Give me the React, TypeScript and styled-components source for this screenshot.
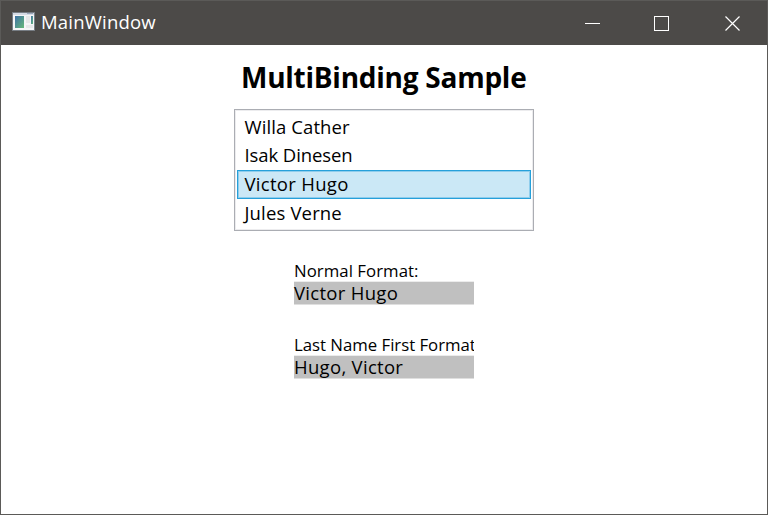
import React, { useState } from "react";
import styled, { createGlobalStyle } from "styled-components";

const Global = createGlobalStyle`
  * { box-sizing: border-box; }
  body { margin: 0; background: #fff; overflow: hidden; }
`;

const Window = styled.div`
  width: 768px;
  height: 515px;
  display: flex;
  flex-direction: column;
  border: 1px solid #5b5a58;
  background: #fff;
  color: #000;
  font-family: "Open Sans", "Noto Sans", sans-serif;
  font-size: 18.5px;
`;

const TitleBar = styled.header`
  height: 44px;
  flex: none;
  display: flex;
  align-items: center;
  padding-left: 11px;
  padding-bottom: 2px;
  background: #4c4a48;
  color: #fff;
`;

const Caption = styled.span`
  flex: 1;
  margin-left: 6px;
  line-height: 24px;
  white-space: nowrap;
  letter-spacing: 0.2px;
`;

const CaptionButton = styled.button<{ $inset: number }>`
  width: 70px;
  height: 42px;
  padding: 2px 0 0 ${(p) => p.$inset}px;
  border: 0;
  background: none;
  display: flex;
  align-items: center;
`;

const Content = styled.main`
  display: flex;
  flex-direction: column;
  align-items: center;
`;

const Heading = styled.h1`
  margin: 13px 0 0;
  width: 286px;
  height: 51px;
  font-size: 28px;
  line-height: 38px;
  font-weight: 700;
  white-space: nowrap;
  letter-spacing: -0.25px;
`;

const ListBox = styled.ul`
  list-style: none;
  margin: 0;
  width: 300px;
  height: 122px;
  padding: 3px 2px 2px;
  border: 1px solid #abadb3;
  box-shadow: inset 0 0 0 1px #ececee;
  display: grid;
  grid-template-rows: 28px 29px 29px 29px;
`;

const ListItem = styled.li<{ $selected: boolean; $spacing: number }>`
  height: 29px;
  padding: 0 0 0 6.5px;
  border: 1px solid ${(p) => (p.$selected ? "#26a0da" : "transparent")};
  background: ${(p) => (p.$selected ? "#cbe8f6" : "transparent")};
  box-shadow: ${(p) => (p.$selected ? "inset 0 0 0 1px #8fcdec" : "none")};
  line-height: 25px;
  white-space: nowrap;
  letter-spacing: ${(p) => p.$spacing}px;
`;

const Field = styled.section`
  width: 180px;
  margin-top: 28px;
`;

const Label = styled.div<{ $spacing: number }>`
  height: 22px;
  padding-top: 1px;
  font-size: 16.8px;
  line-height: 22px;
  white-space: nowrap;
  overflow: hidden;
  letter-spacing: ${(p) => p.$spacing}px;
`;

const Value = styled.div<{ $spacing: number }>`
  height: 24px;
  border-top: 1px solid #ececec;
  border-bottom: 1px solid #dfdfdf;
  background: #c0c0c0;
  line-height: 22px;
  white-space: nowrap;
  letter-spacing: ${(p) => p.$spacing}px;
`;

const IconDrawing = styled.svg`
  flex: none;
  margin-bottom: 1px;
`;

const AppIcon = () => (
  <IconDrawing width="23" height="19" viewBox="0 0 23 19">
    <defs>
      <linearGradient id="pane" x1="0" y1="0" x2="1" y2="1">
        <stop offset="0" stopColor="#3e70a6" />
        <stop offset="1" stopColor="#65b878" />
      </linearGradient>
    </defs>
    <rect x="0.5" y="0.5" width="22" height="18" fill="#f4f5f6" stroke="#777d84" />
    <rect x="1" y="1" width="21" height="2" fill="#d5dae4" />
    <rect x="15" y="1" width="6" height="1" fill="#9aa6ba" />
    <rect x="3" y="4" width="9" height="12" fill="url(#pane)" />
    <rect x="14" y="4" width="4" height="7" fill="#e6e7e8" />
    <rect x="19" y="4" width="2" height="8" fill="url(#pane)" />
    <rect x="14" y="13" width="7" height="3" fill="#e6e7e8" />
  </IconDrawing>
);

const people = [
  { first: "Willa", last: "Cather", spacing: 0.1 },
  { first: "Isak", last: "Dinesen", spacing: -0.1 },
  { first: "Victor", last: "Hugo", spacing: 0.3 },
  { first: "Jules", last: "Verne", spacing: 0.15 },
];

export default function App() {
  const [index, setIndex] = useState(2);
  const person = people[index];
  return (
    <>
      <Global />
      <Window>
        <TitleBar>
          <AppIcon />
          <Caption>MainWindow</Caption>
          <CaptionButton aria-label="Minimize" $inset={28}>
            <svg width="16" height="16" shapeRendering="crispEdges">
              <path d="M0 8.5H15" stroke="#fff" />
            </svg>
          </CaptionButton>
          <CaptionButton aria-label="Maximize" $inset={27}>
            <svg width="16" height="16" shapeRendering="crispEdges">
              <rect x="0.5" y="1.5" width="14" height="14" fill="none" stroke="#fff" />
            </svg>
          </CaptionButton>
          <CaptionButton aria-label="Close" $inset={28}>
            <svg width="16" height="16">
              <path d="M0.5 1.5L14.5 15.5M14.5 1.5L0.5 15.5" stroke="#fff" strokeWidth="1.2" />
            </svg>
          </CaptionButton>
        </TitleBar>
        <Content>
          <Heading>MultiBinding Sample</Heading>
          <ListBox>
            {people.map((p, i) => (
              <ListItem key={p.last} $selected={i === index} $spacing={p.spacing} onClick={() => setIndex(i)}>
                {p.first} {p.last}
              </ListItem>
            ))}
          </ListBox>
          <Field>
            <Label $spacing={0.04}>Normal Format:</Label>
            <Value $spacing={0.3}>{person.first} {person.last}</Value>
          </Field>
          <Field>
            <Label $spacing={-0.02}>Last Name First Format:</Label>
            <Value $spacing={0.3}>{person.last}, {person.first}</Value>
          </Field>
        </Content>
      </Window>
    </>
  );
}
